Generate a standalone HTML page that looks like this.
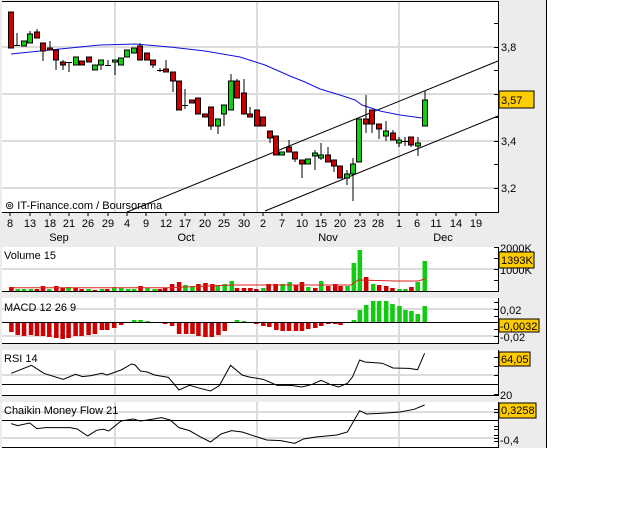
<!DOCTYPE html>
<html><head><meta charset="utf-8"><style>
html,body{margin:0;padding:0;background:#fff;}
svg{display:block;font-family:"Liberation Sans",sans-serif;font-size:11px;}
</style></head><body>
<svg width="640" height="512" viewBox="0 0 640 512" xmlns="http://www.w3.org/2000/svg">
<rect x="0" y="0" width="546" height="448" fill="#ececec"/>
<line x1="546.5" y1="0" x2="546.5" y2="448" stroke="#000"/>
<!-- main plot -->
<rect x="2" y="1" width="497" height="211" fill="#fff"/>
<g stroke="#dcdcdc" stroke-width="2">
<line x1="115" y1="2" x2="115" y2="212"/><line x1="257" y1="2" x2="257" y2="212"/><line x1="399" y1="2" x2="399" y2="212"/>
<line x1="2" y1="47" x2="498" y2="47"/><line x1="2" y1="94" x2="498" y2="94"/><line x1="2" y1="141" x2="498" y2="141"/><line x1="2" y1="188" x2="498" y2="188"/>
</g>
<line x1="2" y1="1.5" x2="499" y2="1.5" stroke="#000"/>
<line x1="498.5" y1="1" x2="498.5" y2="213" stroke="#000"/>
<line x1="2" y1="212.5" x2="499" y2="212.5" stroke="#000"/>
<!-- right axis ticks -->
<g stroke="#000"><line x1="494" y1="23.5" x2="499" y2="23.5"/><line x1="494" y1="47.5" x2="499" y2="47.5"/><line x1="494" y1="70.5" x2="499" y2="70.5"/><line x1="494" y1="94.5" x2="499" y2="94.5"/><line x1="494" y1="117.5" x2="499" y2="117.5"/><line x1="494" y1="141.5" x2="499" y2="141.5"/><line x1="494" y1="164.5" x2="499" y2="164.5"/><line x1="494" y1="188.5" x2="499" y2="188.5"/></g>
<text x="501" y="51">3,8</text><text x="501" y="145">3,4</text><text x="501" y="192">3,2</text>
<!-- channel -->
<line x1="127" y1="212" x2="498" y2="61" stroke="#000"/>
<line x1="265" y1="211" x2="498" y2="116" stroke="#000"/>
<!-- MA -->
<polyline fill="none" stroke="#1010e0" points="11,54 40,51 70,48 100,45 135,44 170,47 205,51 240,57 265,65 290,76 305,82 320,89 340,95 355,100 362,105 380,111 400,115 422,118"/>
<!-- candles -->
<g stroke="#000" stroke-width="1">
<g fill="#cc0000">
<rect x="8.5" y="12" width="5" height="36"/>
<rect x="34.5" y="32" width="5" height="6"/><line x1="37" y1="29" x2="37" y2="32"/>
<line x1="43" y1="48" x2="43" y2="61"/><rect x="40.5" y="43" width="5" height="8"/>
<line x1="50" y1="41" x2="50" y2="48"/><rect x="47.5" y="48" width="5" height="2"/>
<line x1="56" y1="60" x2="56" y2="70"/><rect x="53.5" y="50" width="5" height="10"/>
<line x1="63" y1="60" x2="63" y2="70"/><rect x="60.5" y="62" width="5" height="3"/>
<rect x="79.5" y="61" width="5" height="4"/>
<rect x="86.5" y="57" width="5" height="5"/>
<line x1="140" y1="43" x2="140" y2="46"/><rect x="137.5" y="46" width="5" height="14"/>
<rect x="144.5" y="53" width="5" height="7"/>
<rect x="150.5" y="60" width="5" height="5"/><line x1="153" y1="65" x2="153" y2="68"/>
<line x1="166" y1="60" x2="166" y2="72"/><rect x="163.5" y="69" width="5" height="3"/>
<line x1="173" y1="81" x2="173" y2="92"/><rect x="170.5" y="72" width="5" height="9"/>
<rect x="176.5" y="81" width="5" height="29"/>
<rect x="189.5" y="100" width="5" height="3"/>
<rect x="195.5" y="98" width="5" height="16"/>
<rect x="202.5" y="114" width="5" height="3"/>
<line x1="211" y1="126" x2="211" y2="130"/><rect x="208.5" y="107" width="5" height="19"/>
<line x1="237" y1="79" x2="237" y2="81"/><rect x="234.5" y="81" width="5" height="17"/>
<line x1="244" y1="79" x2="244" y2="93"/><rect x="241.5" y="93" width="5" height="21"/>
<line x1="250" y1="107" x2="250" y2="114"/><rect x="247.5" y="114" width="5" height="3"/>
<rect x="254.5" y="110" width="5" height="16"/>
<rect x="260.5" y="117" width="5" height="9"/>
<line x1="270" y1="138" x2="270" y2="143"/><rect x="267.5" y="131" width="5" height="7"/>
<rect x="273.5" y="136" width="5" height="19"/>
<line x1="289" y1="140" x2="289" y2="147"/><rect x="286.5" y="147" width="5" height="5"/>
<rect x="292.5" y="152" width="5" height="7"/><line x1="295" y1="159" x2="295" y2="162"/>
<line x1="302" y1="164" x2="302" y2="178"/><rect x="299.5" y="160" width="5" height="4"/>
<line x1="328" y1="147" x2="328" y2="155"/><rect x="325.5" y="155" width="5" height="7"/>
<line x1="334" y1="166" x2="334" y2="172"/><rect x="331.5" y="160" width="5" height="6"/>
<rect x="337.5" y="166" width="5" height="12"/>
<line x1="366" y1="95" x2="366" y2="133"/><rect x="363.5" y="119" width="5" height="5"/>
<line x1="372" y1="124" x2="372" y2="133"/><rect x="369.5" y="110" width="5" height="14"/>
<line x1="379" y1="129" x2="379" y2="139"/><rect x="376.5" y="124" width="5" height="5"/>
<line x1="393" y1="130" x2="393" y2="140"/><rect x="390.5" y="133" width="5" height="7"/>
<line x1="411" y1="145" x2="411" y2="147"/><rect x="408.5" y="137" width="5" height="8"/>
</g>
<g fill="#11cc11">
<rect x="21.5" y="41" width="5" height="5"/>
<line x1="30" y1="31" x2="30" y2="34"/><rect x="27.5" y="34" width="5" height="9"/>
<rect x="73.5" y="57" width="5" height="8"/>
<rect x="92.5" y="65" width="5" height="5"/>
<line x1="101" y1="65" x2="101" y2="70"/><rect x="98.5" y="60" width="5" height="5"/>
<line x1="115" y1="62" x2="115" y2="75"/><rect x="112.5" y="60" width="5" height="2"/>
<rect x="118.5" y="58" width="5" height="7"/>
<rect x="124.5" y="50" width="5" height="7"/>
<rect x="131.5" y="48" width="5" height="5"/>
<line x1="218" y1="126" x2="218" y2="134"/><rect x="215.5" y="119" width="5" height="7"/>
<line x1="224" y1="114" x2="224" y2="126"/><rect x="221.5" y="105" width="5" height="9"/>
<line x1="231" y1="74" x2="231" y2="81"/><rect x="228.5" y="81" width="5" height="29"/>
<rect x="279.5" y="152" width="5" height="3"/>
<rect x="305.5" y="159" width="5" height="5"/>
<line x1="315" y1="150" x2="315" y2="170"/><rect x="312.5" y="153" width="5" height="3"/>
<line x1="321" y1="143" x2="321" y2="160"/><rect x="318.5" y="155" width="5" height="3"/>
<line x1="347" y1="170" x2="347" y2="185"/><rect x="344.5" y="174" width="5" height="4"/>
<line x1="353" y1="158" x2="353" y2="201"/><rect x="350.5" y="164" width="5" height="10"/>
<rect x="356.5" y="119" width="5" height="43"/>
<line x1="386" y1="121" x2="386" y2="141"/><rect x="383.5" y="131" width="5" height="5"/>
<line x1="399" y1="137" x2="399" y2="147"/><rect x="396.5" y="140" width="5" height="3"/>
<line x1="418" y1="137" x2="418" y2="156"/><rect x="415.5" y="143" width="5" height="3"/>
<line x1="425" y1="91" x2="425" y2="100"/><rect x="422.5" y="100" width="5" height="26"/>
</g>
<line x1="17" y1="33" x2="17" y2="46"/><line x1="14" y1="45.5" x2="20" y2="45.5"/>
<line x1="69" y1="62" x2="69" y2="72"/><line x1="66" y1="62.5" x2="72" y2="62.5"/>
<line x1="108" y1="60" x2="108" y2="66"/><line x1="105" y1="65.5" x2="111" y2="65.5"/>
<line x1="160" y1="68" x2="160" y2="72"/><line x1="157" y1="70.5" x2="163" y2="70.5"/>
<line x1="185" y1="89" x2="185" y2="109"/><line x1="182" y1="105.5" x2="188" y2="105.5"/>
<line x1="405" y1="137" x2="405" y2="146"/><line x1="402" y1="141.5" x2="408" y2="141.5"/>
</g>
<text x="5" y="209">⊚ IT-Finance.com / Boursorama</text>
<rect x="499" y="91" width="35" height="17" fill="#ffcc00" stroke="#000"/>
<text x="501" y="104">3,57</text>
<!-- date axis -->
<g stroke="#000"><line x1="10" y1="213" x2="10" y2="216"/><line x1="30" y1="213" x2="30" y2="216"/><line x1="50" y1="213" x2="50" y2="216"/><line x1="69" y1="213" x2="69" y2="216"/><line x1="88" y1="213" x2="88" y2="216"/><line x1="108" y1="213" x2="108" y2="216"/><line x1="127" y1="213" x2="127" y2="216"/><line x1="146" y1="213" x2="146" y2="216"/><line x1="166" y1="213" x2="166" y2="216"/><line x1="185" y1="213" x2="185" y2="216"/><line x1="205" y1="213" x2="205" y2="216"/><line x1="224" y1="213" x2="224" y2="216"/><line x1="244" y1="213" x2="244" y2="216"/><line x1="263" y1="213" x2="263" y2="216"/><line x1="282" y1="213" x2="282" y2="216"/><line x1="302" y1="213" x2="302" y2="216"/><line x1="321" y1="213" x2="321" y2="216"/><line x1="340" y1="213" x2="340" y2="216"/><line x1="360" y1="213" x2="360" y2="216"/><line x1="378" y1="213" x2="378" y2="216"/><line x1="399" y1="213" x2="399" y2="216"/><line x1="417" y1="213" x2="417" y2="216"/><line x1="436" y1="213" x2="436" y2="216"/><line x1="456" y1="213" x2="456" y2="216"/><line x1="476" y1="213" x2="476" y2="216"/></g>
<g text-anchor="middle">
<text x="10" y="227">8</text><text x="30" y="227">13</text><text x="50" y="227">18</text><text x="69" y="227">21</text><text x="88" y="227">26</text><text x="108" y="227">29</text><text x="127" y="227">4</text><text x="146" y="227">9</text><text x="166" y="227">12</text><text x="185" y="227">17</text><text x="205" y="227">20</text><text x="224" y="227">25</text><text x="244" y="227">30</text><text x="263" y="227">2</text><text x="282" y="227">7</text><text x="302" y="227">10</text><text x="321" y="227">15</text><text x="340" y="227">20</text><text x="360" y="227">23</text><text x="378" y="227">28</text><text x="399" y="227">1</text><text x="417" y="227">6</text><text x="436" y="227">11</text><text x="456" y="227">14</text><text x="476" y="227">19</text>
<text x="59" y="241">Sep</text><text x="186" y="241">Oct</text><text x="328" y="241">Nov</text><text x="443" y="241">Dec</text>
</g>
<!-- panels background -->
<rect x="2" y="247" width="497" height="44" fill="#fff"/>
<rect x="2" y="298" width="497" height="45" fill="#fff"/>
<rect x="2" y="350" width="497" height="45" fill="#fff"/>
<rect x="2" y="402" width="497" height="45" fill="#fff"/>
<g stroke="#dcdcdc" stroke-width="2">
<line x1="115" y1="247" x2="115" y2="291"/><line x1="257" y1="247" x2="257" y2="291"/><line x1="399" y1="247" x2="399" y2="291"/>
<line x1="115" y1="298" x2="115" y2="343"/><line x1="257" y1="298" x2="257" y2="343"/><line x1="399" y1="298" x2="399" y2="343"/>
<line x1="115" y1="350" x2="115" y2="395"/><line x1="257" y1="350" x2="257" y2="395"/><line x1="399" y1="350" x2="399" y2="395"/>
<line x1="115" y1="402" x2="115" y2="447"/><line x1="257" y1="402" x2="257" y2="447"/><line x1="399" y1="402" x2="399" y2="447"/>
<line x1="2" y1="269" x2="498" y2="269"/><line x1="2" y1="309" x2="498" y2="309"/><line x1="2" y1="336" x2="498" y2="336"/>
<line x1="2" y1="375" x2="498" y2="375"/><line x1="2" y1="412" x2="498" y2="412"/><line x1="2" y1="438" x2="498" y2="438"/>
</g>
<!-- volume bars -->
<g transform="scale(0.3509,1)">
<g fill="#cc0000">
<rect x="26" y="287" width="13" height="4"/><rect x="99" y="289" width="13" height="2"/><rect x="116" y="286" width="13" height="5"/><rect x="154" y="286" width="13" height="5"/><rect x="172" y="288" width="13" height="3"/><rect x="209" y="288" width="13" height="3"/><rect x="226" y="289" width="13" height="2"/><rect x="264" y="290" width="13" height="1"/><rect x="299" y="289" width="13" height="2"/><rect x="394" y="286" width="13" height="5"/><rect x="449" y="289" width="13" height="2"/><rect x="464" y="288" width="13" height="3"/><rect x="484" y="284" width="13" height="7"/><rect x="504" y="282" width="13" height="9"/><rect x="559" y="284" width="13" height="7"/><rect x="579" y="283" width="13" height="8"/><rect x="599" y="284" width="13" height="7"/><rect x="669" y="288" width="13" height="3"/><rect x="689" y="288" width="13" height="3"/><rect x="707" y="288" width="13" height="3"/><rect x="724" y="289" width="13" height="2"/><rect x="759" y="284" width="13" height="7"/><rect x="779" y="284" width="13" height="7"/><rect x="837" y="285" width="13" height="6"/><rect x="854" y="282" width="13" height="9"/><rect x="892" y="288" width="13" height="3"/><rect x="929" y="286" width="13" height="5"/><rect x="949" y="284" width="13" height="7"/><rect x="964" y="286" width="13" height="5"/><rect x="1037" y="277" width="13" height="14"/><rect x="1074" y="285" width="13" height="6"/><rect x="1094" y="286" width="13" height="5"/><rect x="1112" y="288" width="13" height="3"/><rect x="1166" y="287" width="13" height="4"/>
</g>
<g fill="#11cc11">
<rect x="44" y="289" width="13" height="2"/><rect x="62" y="289" width="13" height="2"/><rect x="82" y="289" width="13" height="2"/><rect x="134" y="289" width="13" height="2"/><rect x="189" y="287" width="13" height="4"/><rect x="246" y="289" width="13" height="2"/><rect x="284" y="289" width="13" height="2"/><rect x="319" y="287" width="13" height="4"/><rect x="339" y="288" width="13" height="3"/><rect x="359" y="289" width="13" height="2"/><rect x="376" y="289" width="13" height="2"/><rect x="414" y="288" width="13" height="3"/><rect x="434" y="289" width="13" height="2"/><rect x="522" y="285" width="13" height="6"/><rect x="542" y="286" width="13" height="5"/><rect x="614" y="285" width="13" height="6"/><rect x="634" y="284" width="13" height="7"/><rect x="654" y="281" width="13" height="10"/><rect x="744" y="288" width="13" height="3"/><rect x="799" y="284" width="13" height="7"/><rect x="819" y="282" width="13" height="9"/><rect x="872" y="287" width="13" height="4"/><rect x="909" y="281" width="13" height="10"/><rect x="984" y="286" width="13" height="5"/><rect x="1002" y="263" width="13" height="28"/><rect x="1019" y="250" width="13" height="41"/><rect x="1057" y="284" width="13" height="7"/><rect x="1132" y="289" width="13" height="2"/><rect x="1149" y="289" width="13" height="2"/><rect x="1184" y="282" width="13" height="9"/><rect x="1204" y="261" width="13" height="30"/>
</g>
</g>
<polyline fill="none" stroke="#dd2222" points="10.5,287.7 168,287.7 232,285 351,285 358,280 396,281 418,281 425,279"/>
<!-- MACD bars -->
<g transform="scale(0.3509,1)">
<g fill="#cc0000">
<rect x="26" y="322" width="13" height="10"/><rect x="44" y="322" width="13" height="13"/><rect x="62" y="322" width="13" height="14"/><rect x="82" y="322" width="13" height="13"/><rect x="99" y="322" width="13" height="14"/><rect x="116" y="322" width="13" height="14"/><rect x="134" y="322" width="13" height="15"/><rect x="154" y="322" width="13" height="16"/><rect x="172" y="322" width="13" height="17"/><rect x="189" y="322" width="13" height="16"/><rect x="209" y="322" width="13" height="14"/><rect x="226" y="322" width="13" height="14"/><rect x="246" y="322" width="13" height="13"/><rect x="264" y="322" width="13" height="12"/><rect x="284" y="322" width="13" height="8"/><rect x="299" y="322" width="13" height="8"/><rect x="319" y="322" width="13" height="6"/><rect x="339" y="322" width="13" height="3"/>
<rect x="449" y="322" width="13" height="1"/><rect x="464" y="322" width="13" height="2"/><rect x="484" y="322" width="13" height="4"/><rect x="504" y="322" width="13" height="12"/><rect x="524" y="322" width="13" height="12"/><rect x="542" y="322" width="13" height="12"/><rect x="559" y="322" width="13" height="14"/><rect x="579" y="322" width="13" height="15"/><rect x="597" y="322" width="13" height="15"/><rect x="616" y="322" width="13" height="13"/><rect x="634" y="322" width="13" height="9"/>
<rect x="724" y="322" width="13" height="2"/><rect x="744" y="322" width="13" height="4"/><rect x="761" y="322" width="13" height="5"/><rect x="781" y="322" width="13" height="8"/><rect x="799" y="322" width="13" height="9"/><rect x="817" y="322" width="13" height="9"/><rect x="837" y="322" width="13" height="9"/><rect x="854" y="322" width="13" height="9"/><rect x="872" y="322" width="13" height="7"/><rect x="892" y="322" width="13" height="6"/><rect x="909" y="322" width="13" height="4"/><rect x="929" y="322" width="13" height="2"/><rect x="949" y="322" width="13" height="2"/><rect x="964" y="322" width="13" height="3"/><rect x="984" y="322" width="13" height="1"/>
</g>
<g fill="#11cc11">
<rect x="376" y="320" width="13" height="2"/><rect x="394" y="320" width="13" height="2"/><rect x="414" y="321" width="13" height="1"/><rect x="669" y="320" width="13" height="2"/><rect x="689" y="321" width="13" height="1"/>
<rect x="1002" y="320" width="13" height="2"/><rect x="1019" y="310" width="13" height="12"/><rect x="1037" y="305" width="13" height="17"/><rect x="1057" y="301" width="13" height="21"/><rect x="1074" y="301" width="13" height="21"/><rect x="1094" y="301" width="13" height="21"/><rect x="1112" y="304" width="13" height="18"/><rect x="1132" y="306" width="13" height="16"/><rect x="1149" y="310" width="13" height="12"/><rect x="1166" y="311" width="13" height="11"/><rect x="1184" y="314" width="13" height="8"/><rect x="1204" y="306" width="13" height="16"/>
</g>
</g>
<line x1="2" y1="322.5" x2="499" y2="322.5" stroke="#000"/>
<!-- RSI & CMF -->
<line x1="2" y1="384.5" x2="499" y2="384.5" stroke="#000"/>
<line x1="2" y1="420.5" x2="499" y2="420.5" stroke="#000"/>
<g transform="translate(0,240) scale(0.3509,0.3333)" fill="none" stroke="#000">
<polyline vector-effect="non-scaling-stroke" points="32,400 90,376 125,400 180,418 215,403 235,410 260,407 290,400 305,405 345,390 375,372 385,375 400,393 420,396 440,405 480,412 510,450 540,436 570,445 600,453 625,437 657,376 690,405 710,411 750,418 790,436 830,436 860,441 890,433 915,421 940,433 965,441 990,430 1005,410 1025,360 1040,366 1090,370 1120,384 1165,385 1190,389 1210,340"/>
<polyline vector-effect="non-scaling-stroke" points="32,551 50,557 85,549 105,566 130,563 200,563 220,567 250,588 275,571 295,568 310,573 345,543 380,537 400,543 420,540 460,533 485,540 510,563 540,572 570,590 600,606 630,582 660,572 690,576 730,590 760,600 800,602 840,610 865,597 900,591 960,585 990,576 1025,512 1045,522 1100,519 1140,516 1180,508 1210,495"/>
</g>
<!-- panel borders -->
<g stroke="#000">
<line x1="2" y1="291.5" x2="499" y2="291.5"/><line x1="498.5" y1="247" x2="498.5" y2="292"/>
<line x1="2" y1="343.5" x2="499" y2="343.5"/><line x1="498.5" y1="298" x2="498.5" y2="344"/>
<line x1="2" y1="395.5" x2="499" y2="395.5"/><line x1="498.5" y1="350" x2="498.5" y2="396"/>
<line x1="2" y1="447.5" x2="499" y2="447.5"/><line x1="498.5" y1="402" x2="498.5" y2="448"/>
<line x1="494" y1="247.5" x2="499" y2="247.5"/><line x1="494" y1="258.5" x2="499" y2="258.5"/><line x1="494" y1="269.5" x2="499" y2="269.5"/><line x1="494" y1="280.5" x2="499" y2="280.5"/>
<line x1="494" y1="302.5" x2="499" y2="302.5"/><line x1="494" y1="309.5" x2="499" y2="309.5"/><line x1="494" y1="316.5" x2="499" y2="316.5"/><line x1="494" y1="329.5" x2="499" y2="329.5"/><line x1="494" y1="336.5" x2="499" y2="336.5"/>
<line x1="494" y1="357.5" x2="499" y2="357.5"/><line x1="494" y1="366.5" x2="499" y2="366.5"/><line x1="494" y1="375.5" x2="499" y2="375.5"/><line x1="494" y1="394.5" x2="499" y2="394.5"/>
<line x1="494" y1="409.5" x2="499" y2="409.5"/><line x1="494" y1="412.5" x2="499" y2="412.5"/><line x1="494" y1="426.5" x2="499" y2="426.5"/><line x1="494" y1="429.5" x2="499" y2="429.5"/><line x1="494" y1="435.5" x2="499" y2="435.5"/><line x1="494" y1="438.5" x2="499" y2="438.5"/><line x1="494" y1="441.5" x2="499" y2="441.5"/>
</g>
<text x="4" y="259">Volume 15</text>
<text x="4" y="311">MACD 12 26 9</text>
<text x="4" y="362">RSI 14</text>
<text x="4" y="414">Chaikin Money Flow 21</text>
<text x="500" y="252">2000K</text><text x="500" y="274">1000K</text>
<rect x="499" y="252" width="35" height="16" fill="#ffcc00" stroke="#000"/><text x="501" y="264">1393K</text>
<text x="500" y="314">0,02</text><text x="500" y="341">-0,02</text>
<rect x="499" y="319" width="40" height="13" fill="#ffcc00" stroke="#000"/><text x="500" y="330">-0,0032</text>
<rect x="499" y="352" width="31" height="14" fill="#ffcc00" stroke="#000"/><text x="501" y="363">64,05</text>
<text x="500" y="399">20</text>
<rect x="499" y="403" width="37" height="15" fill="#ffcc00" stroke="#000"/><text x="501" y="414">0,3258</text>
<text x="500" y="444">-0,4</text>
</svg>
</body></html>
